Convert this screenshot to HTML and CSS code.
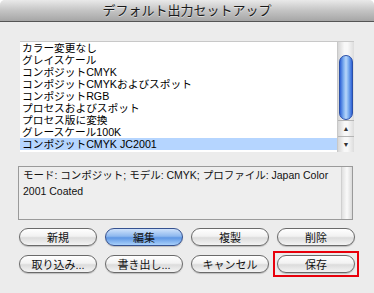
FILE: index.html
```html
<!DOCTYPE html>
<html lang="ja">
<head>
  <meta charset="UTF-8">
  <title>デフォルト出力セットアップ</title>
  <link rel="stylesheet" href="styles.css">
</head>
<body>
  <div class="window">
    <div class="titlebar">デフォルト出力セットアップ</div>

    <div class="content">
      <div class="listbox">
        <ul class="list">
          <li>カラー変更なし</li>
          <li>グレイスケール</li>
          <li>コンポジットCMYK</li>
          <li>コンポジットCMYKおよびスポット</li>
          <li>コンポジットRGB</li>
          <li>プロセスおよびスポット</li>
          <li>プロセス版に変換</li>
          <li>グレースケール100K</li>
          <li class="selected">コンポジットCMYK JC2001</li>
        </ul>
        <div class="scrollbar">
          <div class="track">
            <div class="thumb"></div>
          </div>
          <div class="arrow">&#9650;</div>
          <div class="arrow">&#9660;</div>
        </div>
      </div>

      <div class="desc">
        <p>モード: コンポジット; モデル: CMYK; プロファイル: Japan Color 2001 Coated</p>
        <div class="desc-scroll"></div>
      </div>

      <div class="buttons">
        <button class="btn">新規</button>
        <button class="btn default">編集</button>
        <button class="btn">複製</button>
        <button class="btn">削除</button>
        <button class="btn">取り込み...</button>
        <button class="btn">書き出し...</button>
        <button class="btn">キャンセル</button>
        <button class="btn marked">保存</button>
      </div>
    </div>
  </div>
</body>
</html>
```

FILE: styles.css
```css
body {
  margin: 0;
  padding: 0;
  background-color: #ffffff;
  font-family: "Liberation Sans", "Noto Sans CJK JP", sans-serif;
}
.window {
  width: 374px;
  height: 293px;
  background-color: #ececec;
  border-radius: 5px 5px 0 0;
  overflow: hidden;
}
.titlebar {
  height: 21px;
  line-height: 21px;
  text-align: center;
  font-size: 13px;
  color: #1a1a1a;
  text-shadow: 0 1px 0 rgba(255, 255, 255, 0.5);
  background: linear-gradient(#e9e9e9, #c4c4c4 50%, #a6a6a6);
  border-bottom: 1px solid #555555;
}
.content {
  padding: 19px 0 0 18px;
}
.listbox {
  display: flex;
  width: 334px;
  height: 111px;
  margin-left: 2px;
  background-color: #ffffff;
  border-top: 1px solid #c8c8c8;
  box-sizing: border-box;
}
.list {
  flex: 1;
  list-style: none;
  margin: 0;
  padding: 0;
  font-size: 10.7px;
  line-height: 12px;
  color: #000000;
}
.list li {
  height: 12px;
  padding-left: 2px;
  white-space: nowrap;
}
.list li.selected {
  background-color: #b5d5ff;
}
.scrollbar {
  width: 16px;
  display: flex;
  flex-direction: column;
  border-left: 1px solid #c8c8c8;
  background: linear-gradient(90deg, #d6d6d6, #f8f8f8 40%, #f8f8f8 60%, #dcdcdc);
}
.track {
  height: 79px;
  padding-top: 13px;
  box-sizing: border-box;
}
.thumb {
  height: 65px;
  margin: 0 1px;
  border-radius: 7px;
  border: 1px solid #2a4fa8;
  box-sizing: border-box;
  background: linear-gradient(90deg, #2f62d6, #7fb0f0 30%, #b8d6fa 50%, #7fb0f0 70%, #2f62d6);
}
.arrow {
  height: 15px;
  line-height: 15px;
  text-align: center;
  font-size: 7px;
  color: #333333;
  border-top: 1px solid #b4b4b4;
}
.desc {
  display: flex;
  width: 335px;
  height: 54px;
  margin-top: 14px;
  border: 1px solid #9a9a9a;
  box-sizing: border-box;
  background-color: #eeeeee;
}
.desc p {
  flex: 1;
  margin: 0;
  padding: 0 4px;
  font-size: 10.5px;
  line-height: 16px;
  color: #111111;
}
.desc-scroll {
  width: 10px;
  background: linear-gradient(90deg, #e0e0e0, #fafafa 50%, #dadada);
  border-left: 1px solid #d0d0d0;
}
.buttons {
  display: grid;
  grid-template-columns: repeat(4, 78px);
  grid-auto-rows: 18px;
  column-gap: 8px;
  row-gap: 9px;
  margin: 8px 0 0 1px;
}
.btn {
  position: relative;
  padding: 0;
  font-family: inherit;
  font-size: 11px;
  color: #111111;
  border: 1px solid #6a6a6a;
  border-radius: 9px;
  background: linear-gradient(#ffffff, #f2f2f2 45%, #dcdcdc 55%, #f4f4f4);
  box-shadow: 0 1px 1px rgba(0, 0, 0, 0.2);
}
.btn.default {
  border-color: #35518f;
  background: linear-gradient(#cfe2fb, #8fb9ef 45%, #5f97e4 55%, #a8d0fb);
}
.btn.marked::after {
  content: "";
  position: absolute;
  top: -5px;
  left: -5px;
  right: -5px;
  bottom: -5px;
  border: 2px solid #e8000b;
}
```
